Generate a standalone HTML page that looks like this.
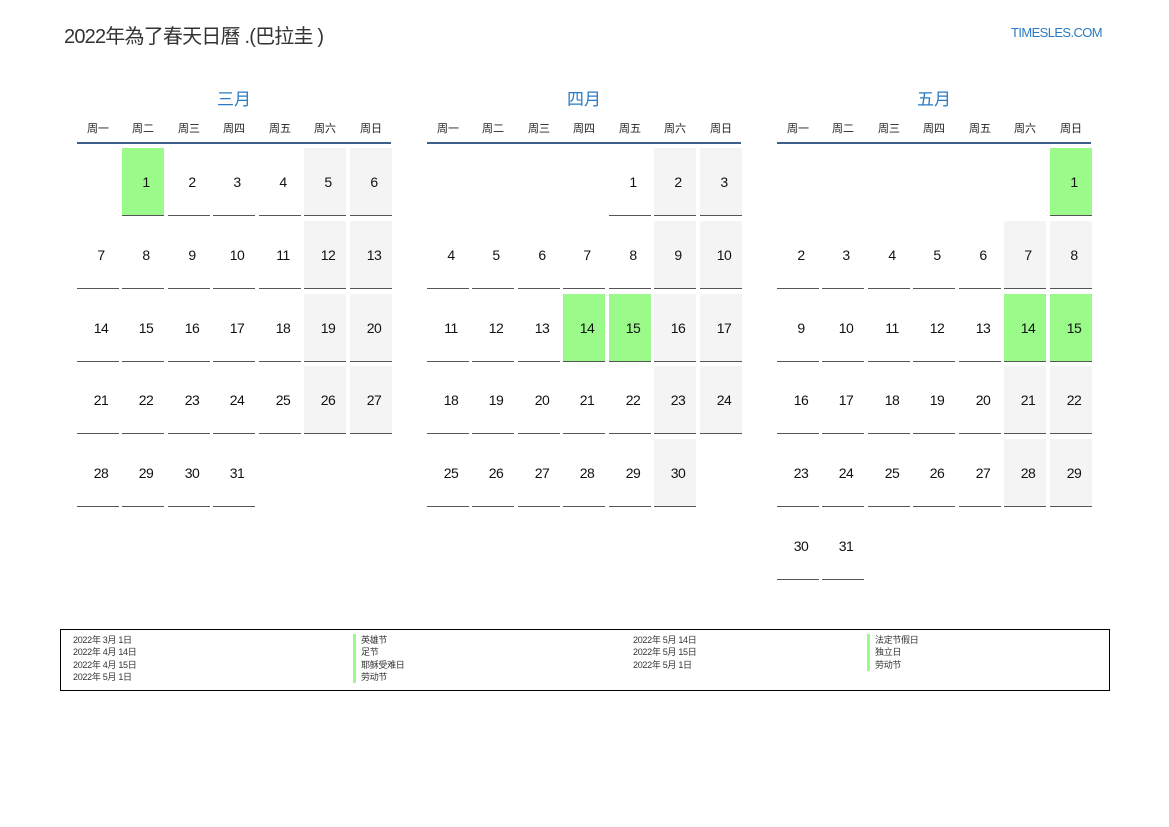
<!DOCTYPE html>
<html><head><meta charset="utf-8"><style>
body{margin:0;width:1169px;height:827px;background:#fff;font-family:"Liberation Sans","Noto Sans CJK SC",sans-serif;position:relative;overflow:hidden}
.a{position:absolute}
.t{left:64px;top:20px;font-size:20px;color:#333;letter-spacing:-0.8px}
.s{left:1011px;top:25px;font-size:13px;color:#2a7bc4;letter-spacing:-0.6px}
.mt{font-size:17px;color:#2a7bc4;width:314px;text-align:center;top:85px}
.wd{font-size:11px;color:#222;width:42px;text-align:center;top:120px}
.hl{height:2px;background:#3d5f88;width:314px;top:142px}
.c{width:42px;height:68px;border-bottom:1px solid #555;box-sizing:border-box;text-align:center;padding-left:6px;line-height:68px;font-size:14px;color:#111;letter-spacing:-0.5px}
.g{background:#f4f4f4}.gr{background:#9afa8a}
.lg{left:60px;top:629px;width:1050px;height:62px;border:1px solid #000;box-sizing:border-box}
.l{font-size:9px;color:#333;line-height:12.3px;letter-spacing:-0.3px}
.mk{border-left:3px solid #9afa8a;padding-left:5px}
</style></head><body>
<div class="a t">2022年為了春天日曆 .(巴拉圭 )</div>
<div class="a s">TIMESLES.COM</div>
<div class="a lg"></div>
<div class="a l" style="left:73px;top:634px">2022年 3月 1日<br>2022年 4月 14日<br>2022年 4月 15日<br>2022年 5月 1日</div>
<div class="a l" style="left:353px;top:634px"><div class="mk">英雄节</div><div class="mk">足节</div><div class="mk">耶稣受难日</div><div class="mk">劳动节</div></div>
<div class="a l" style="left:633px;top:634px">2022年 5月 14日<br>2022年 5月 15日<br>2022年 5月 1日</div>
<div class="a l" style="left:867px;top:634px"><div class="mk">法定节假日</div><div class="mk">独立日</div><div class="mk">劳动节</div></div>
<script>
var months=[["三月",77,1,31,[1]],["四月",427,4,30,[14,15]],["五月",777,6,31,[1,14,15]]];
var wd=["周一","周二","周三","周四","周五","周六","周日"];
var xs=[77,122,168,213,259,304,350],h="";
months.forEach(function(m){
 var L=m[1];
 h+='<div class="a mt" style="left:'+L+'px">'+m[0]+'</div><div class="a hl" style="left:'+L+'px"></div>';
 for(var i=0;i<7;i++)h+='<div class="a wd" style="left:'+(L+xs[i]-77)+'px">'+wd[i]+'</div>';
 for(var d=1;d<=m[3];d++){var p=m[2]+d-1,col=p%7,row=Math.floor(p/7);
  var cls=m[4].indexOf(d)>=0?"gr":(col>=5?"g":"");
  h+='<div class="a c '+cls+'" style="left:'+(L+xs[col]-77)+'px;top:'+(148+row*72.8)+'px">'+d+'</div>';}
});
document.body.insertAdjacentHTML("beforeend",h);
</script>
</body></html>
